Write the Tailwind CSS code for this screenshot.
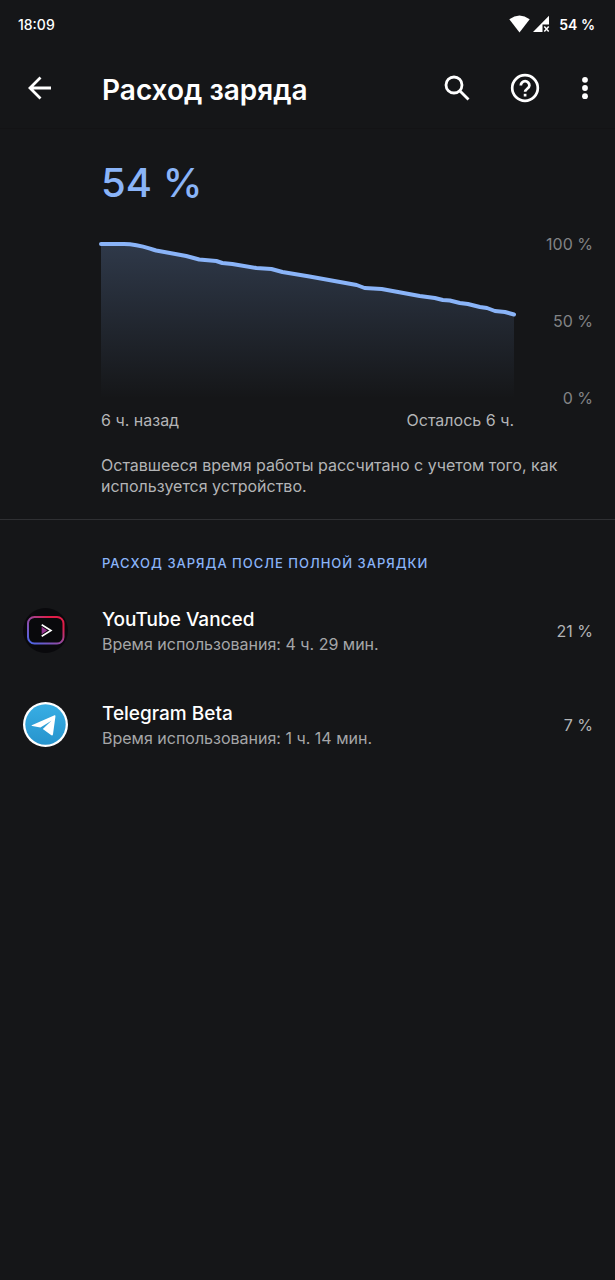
<!DOCTYPE html>
<html lang="ru">
<head>
<meta charset="utf-8">
<meta name="viewport" content="width=device-width, initial-scale=1">
<title>Расход заряда</title>
<script src="https://cdn.jsdelivr.net/npm/@tailwindcss/browser@4"></script>
</head>
<body class="min-h-screen bg-[#151618] font-['Inter','Roboto',sans-serif] text-white">
<div class="flex h-12 items-center justify-between pr-5 pl-[18px] text-[14px] font-medium">
  <time>18:09</time>
  <div class="flex items-center">
    <svg class="h-[18px] w-[21px]" viewBox="0 0 21 18" fill="#fff" aria-hidden="true"><path d="M.3 4.2Q10.500-3 20.700 4.200L10.500 17.500Z"/></svg>
    <svg class="ml-[3px] h-[18px] w-[17px]" viewBox="0 0 17 18" aria-hidden="true"><path d="M16 .8V9.500H9.500V17H0Z" fill="#fff"/><path d="m11.300 11.500 4.400 5m0-5-4.400 5" stroke="#fff" stroke-width="1.500"/></svg>
    <span class="ml-[9px] font-semibold">54 %</span>
  </div>
</div>
<header class="flex h-[81px] items-center border-b border-[#131315] pr-[22px] pl-6">
  <button class="size-8" aria-label="Назад"><svg class="size-8" viewBox="0 0 32 32" fill="none" stroke="#fff" stroke-width="2.800" aria-hidden="true"><path d="M27 16H6.500M16.500 5.500 6 16l10.500 10.500"/></svg></button>
  <h1 class="ml-[46px] flex-1 pt-1 text-[28px] leading-9 font-semibold">Расход заряда</h1>
  <button class="size-8" aria-label="Поиск"><svg class="size-8" viewBox="0 0 32 32" fill="none" stroke="#fff" stroke-width="2.800" aria-hidden="true"><circle cx="13" cy="13" r="8"/><path d="m18.500 18.500 9 9"/></svg></button>
  <button class="ml-9 size-8" aria-label="Справка"><svg class="size-8" viewBox="0 0 32 32" fill="none" stroke="#fff" stroke-width="2.700" aria-hidden="true"><circle cx="16" cy="16" r="12.800"/><path d="M11.800 13.500a4.300 4.300 0 1 1 8.600 0c0 3-4.300 3.400-4.300 6.300"/><path d="M16.100 21.800v2.700"/></svg></button>
  <button class="ml-9 h-8 w-4" aria-label="Ещё"><svg class="h-8 w-4" viewBox="0 0 16 32" fill="#fff" aria-hidden="true"><circle cx="8" cy="7.800" r="2.900"/><circle cx="8" cy="16" r="2.900"/><circle cx="8" cy="24.200" r="2.900"/></svg></button>
</header>
<main>
  <section class="border-b border-[#2f3033] pr-[22px] pb-[22px] pl-[101px]">
    <p class="pt-[30px] text-[40px] leading-[48px] font-medium text-[#8ab4f8]">54 %</p>
    <div class="mt-[25px] flex text-[16px] leading-6 text-[#828385]">
      <div class="flex-1 pt-3">
        <svg class="block h-[155px] w-full overflow-visible" viewBox="0 0 412 155" preserveAspectRatio="none" role="img" aria-label="Заряд батареи: 100 % шесть часов назад, сейчас 54 %">
          <defs><linearGradient id="fade" x1="0" y1="0" x2="0" y2="1"><stop offset="0" stop-color="#8ab4f8" stop-opacity=".22"/><stop offset="1" stop-color="#8ab4f8" stop-opacity="0"/></linearGradient></defs>
          <path fill="url(#fade)" d="M0 0H27C38 1 46 4 55 6.500L85 12 98 15.500 115 17 121 19 131 20 155 24 170 25 181 28 208 32.500 255 41 263 44 280 45 318 52 333 54 341 56 348 56.500 358 59 366 60 378 63 385 64 393 67 403 68 412 70.500V155H0Z"/>
          <path fill="none" stroke="#8ab4f8" stroke-width="4" stroke-linecap="round" stroke-linejoin="round" vector-effect="non-scaling-stroke" d="M0 0H23C38 0 46 4 55 6.500L85 12 98 15.500 115 17 121 19 131 20 155 24 170 25 181 28 208 32.500 255 41 263 44 280 45 318 52 333 54 341 56 348 56.500 358 59 366 60 378 63 385 64 393 67 403 68 412 70.500"/>
        </svg>
        <div class="mt-[9px] flex justify-between text-[#b3b4b6]"><span>6 ч. назад</span><span>Осталось 6 ч.</span></div>
      </div>
      <div class="flex h-[178px] w-[79px] flex-col justify-between text-right"><span>100 %</span><span>50 %</span><span>0 %</span></div>
    </div>
    <p class="mt-[23px] text-[16px] leading-[21px] text-[#b3b4b6]">Оставшееся время работы рассчитано с учетом того, как используется устройство.</p>
  </section>
  <section>
    <h2 class="pt-[33px] pr-[22px] pl-[102px] text-[13px] leading-5 font-medium tracking-[1px] text-[#8ab4f8] uppercase">Расход заряда после полной зарядки</h2>
    <ul class="mt-[10px]">
      <li class="flex h-[94px] items-center pr-[22px] pl-[23px]">
        <svg class="size-[45px]" viewBox="0 0 45 45" fill="none" aria-hidden="true">
          <defs><linearGradient id="frame" x1="0" y1="1" x2="1" y2="0"><stop offset="0" stop-color="#4668ec"/><stop offset=".5" stop-color="#99479c"/><stop offset=".8" stop-color="#df1d48"/></linearGradient></defs>
          <circle cx="22.500" cy="22.500" r="22.500" fill="#09090c"/>
          <rect x="5" y="9" width="35.500" height="26.500" rx="6.500" stroke="url(#frame)" stroke-width="2"/>
          <path d="M18.700 18.800v7.400l5.600-3.700z" fill="#95358f"/>
          <path d="m18.700 16.700 9.300 5.800-9.300 5.800" stroke="#fff" stroke-width="1.600"/>
        </svg>
        <div class="ml-[34px] flex-1 pt-[3px]"><h3 class="text-[19px] leading-6 font-medium">YouTube Vanced</h3><p class="text-[16px] leading-6 text-[#a5a6a8]">Время использования: 4 ч. 29 мин.</p></div>
        <span class="pt-[2px] text-[16px] leading-6 text-[#b3b4b6]">21 %</span>
      </li>
      <li class="flex h-[94px] items-center pr-[22px] pl-[23px]">
        <svg class="size-[45px]" viewBox="0 0 45 45" aria-hidden="true">
          <defs><linearGradient id="sky" x1="0" y1="0" x2="0" y2="1"><stop offset="0" stop-color="#38aee4"/><stop offset="1" stop-color="#2794cd"/></linearGradient></defs>
          <circle cx="22.500" cy="22.500" r="22.500" fill="#fff"/><circle cx="22.500" cy="22.500" r="20.200" fill="url(#sky)"/>
          <path fill="#fff" d="M9.300 22.900 31 13.500c1-.4 1.600.2 1.400 1.200L30 32.300c-.2 1.200-1 1.500-2 .8l-8.200-6.200 8.600-8.200-11 6.900-8.100-1.500c-.9-.3-.9-.9 0-1.200Z"/>
        </svg>
        <div class="ml-[34px] flex-1 pt-[3px]"><h3 class="text-[19px] leading-6 font-medium">Telegram Beta</h3><p class="text-[16px] leading-6 text-[#a5a6a8]">Время использования: 1 ч. 14 мин.</p></div>
        <span class="pt-[2px] text-[16px] leading-6 text-[#b3b4b6]">7 %</span>
      </li>
    </ul>
  </section>
</main>
</body>
</html>
